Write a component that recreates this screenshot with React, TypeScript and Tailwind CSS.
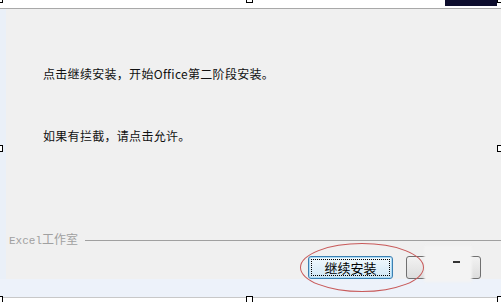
import React from 'react';

const cjk = { fontFamily: '"Noto Sans CJK SC", "DejaVu Sans", sans-serif' };

function Handle({ className }: { className: string }) {
  return <div className={`absolute w-[7px] h-[7px] border border-black bg-white ${className}`} />;
}

export default function App() {
  return (
    <div className="relative w-[501px] h-[302px] overflow-hidden bg-white" style={cjk}>
      {/* top white band */}
      <div className="h-[9px] bg-white border-b border-[#a8a8a8]" />

      <div className="flex h-[270px]">
        <div className="w-[6px] bg-[#eaf0f8]" />
        <div className="flex-1 flex flex-col bg-[#f0f0f0]">
          <div className="pt-[56px] pl-[37px] text-[12px] text-[#111] leading-[18px] tracking-[0.3px]">
            点击继续安装，开始Office第二阶段安装。
          </div>
          <div className="pt-[44px] pl-[37px] text-[12px] text-[#111] leading-[18px] tracking-[0.3px]">
            如果有拦截，请点击允许。
          </div>

          <div className="mt-[88px] flex items-center pl-[3px]">
            <span className="text-[11px] text-[#a0a0a0] leading-none" style={{ fontFamily: '"Liberation Mono", "Noto Sans CJK SC", monospace' }}>
              Excel<span className="text-[12px]" style={cjk}>工作室</span>
            </span>
            <div className="flex-1 ml-[7px] h-0 border-t border-[#a0a0a0]" />
          </div>

          <div className="mt-[9px] flex pl-[302px] gap-[13px]">
            <button className="w-[85px] h-[23px] rounded-[3px] border border-[#3c7fb1] bg-gradient-to-b from-[#f2f9fd] to-[#cfe6f5] text-[13px] text-black flex items-center justify-center shadow-[inset_0_0_0_1px_#a9dbf6]">
              <span className="border border-dotted border-black px-[12px] leading-[15px]">继续安装</span>
            </button>
            <button className="w-[75px] h-[23px] rounded-[3px] border border-[#707070] bg-gradient-to-b from-[#f2f2f2] to-[#dddddd]" />
          </div>
        </div>
      </div>

      {/* bottom band */}
      <div className="h-[19px] bg-[#edf2fa] border-b border-[#c8c8c8]" />

      {/* blurred watermark area */}
      <div className="absolute left-[424px] top-[246px] w-[48px] h-[36px] bg-[#f3f3f3] blur-[1px]" />
      <div className="absolute left-[453px] top-[261px] w-[7px] h-[2px] bg-[#333]" />

      {/* red ellipse */}
      <div className="absolute left-[300px] top-[243px] w-[124px] h-[49px] rounded-[50%] border border-[#c85a5a]" />

      {/* dark navy tab */}
      <div className="absolute left-[445px] top-0 w-[52px] h-[6px] bg-[#0c0c2c]" />

      <Handle className="-left-[4px] -top-[4px]" />
      <Handle className="left-[246px] -top-[4px]" />
      <Handle className="left-[497px] -top-[4px]" />
      <Handle className="-left-[4px] top-[145px]" />
      <Handle className="left-[497px] top-[145px]" />
      <Handle className="-left-[4px] top-[296px]" />
      <Handle className="left-[246px] top-[296px]" />
      <Handle className="left-[497px] top-[296px]" />
    </div>
  );
}
